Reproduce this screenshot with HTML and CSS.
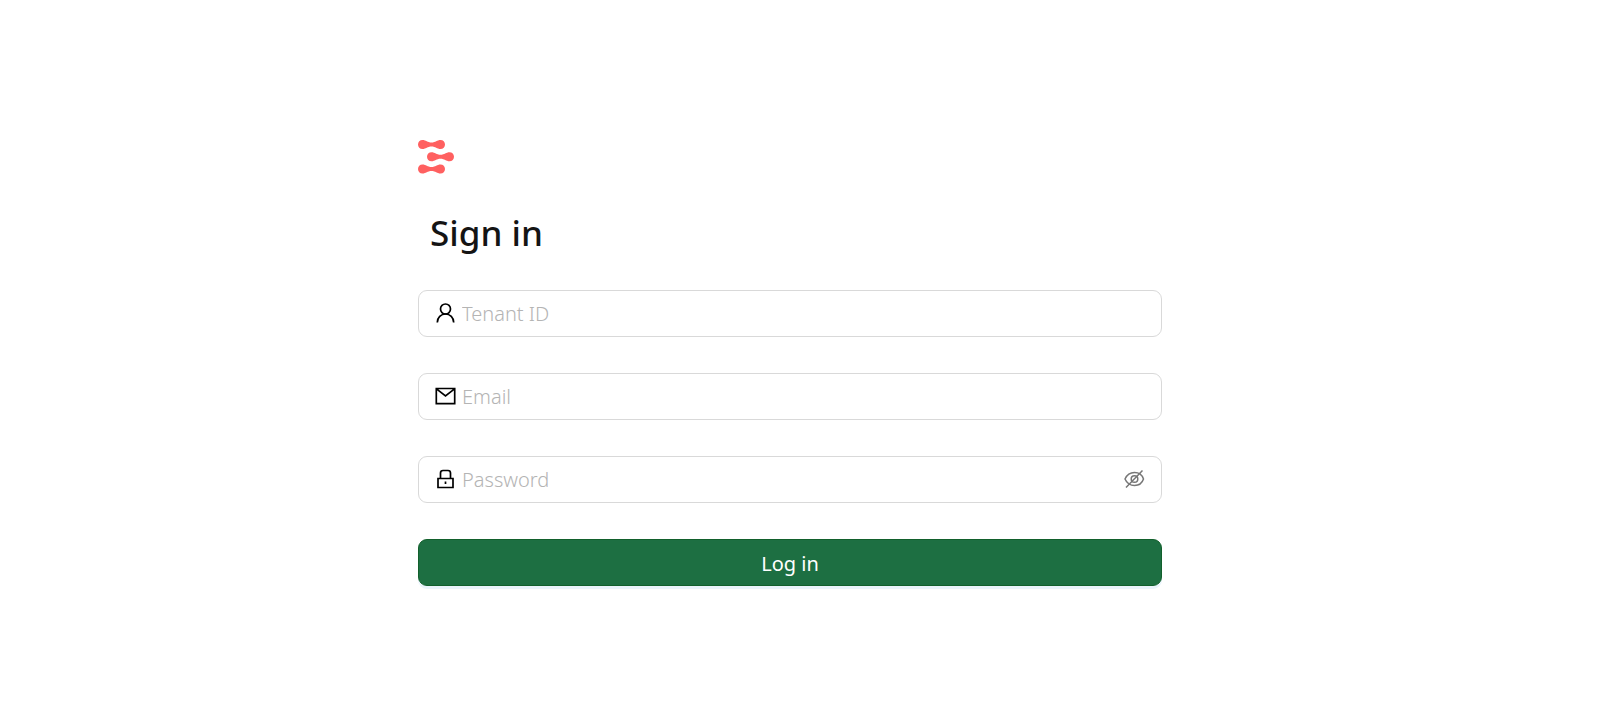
FILE: index.html
```html
<!DOCTYPE html>
<html lang="en">
<head>
    <meta charset="utf-8">
    <title>Sign in</title>
    <link rel="stylesheet" href="styles.css">
</head>
<body>
    <main class="login">
        <svg class="logo" viewBox="0 0 36 34" aria-hidden="true">
            <defs>
                <path id="bar" d="M4.500 0C8 0 9.500 2.500 13.500 2.500S19 0 22.500 0C25.200 0 27 2 27 4.500S25.200 9 22.500 9C19 9 17.500 6.500 13.500 6.500S8 9 4.500 9C1.800 9 0 7 0 4.500S1.800 0 4.500 0Z"/>
            </defs>
            <use href="#bar"/>
            <use href="#bar" x="9" y="12.300"/>
            <use href="#bar" y="24.600"/>
        </svg>

        <h1>Sign in</h1>

        <form class="login-form">
            <div class="field">
                <label for="tenant" aria-label="Tenant ID">
                    <svg class="icon" viewBox="0 0 21 21">
                        <circle cx="10.500" cy="6" r="5"/>
                        <path d="M2.300 19.500C2.300 14.500 6 11 10.500 11S18.700 14.500 18.700 19.500"/>
                    </svg>
                </label>
                <input type="text" id="tenant" placeholder="Tenant ID">
            </div>
            <div class="field">
                <label for="email" aria-label="Email">
                    <svg class="icon" viewBox="0 0 21 21">
                        <path d="M1.300 2.500H19.700V17.700H1.300ZM1.800 3.200L10.500 10L19.200 3.200"/>
                    </svg>
                </label>
                <input type="email" id="email" placeholder="Email">
            </div>
            <div class="field">
                <label for="password" aria-label="Password">
                    <svg class="icon" viewBox="0 0 21 21">
                        <path d="M3 9.500H18V18.500H3ZM5.500 9.500V4Q5.500 1.500 8 1.500H13Q15.500 1.500 15.500 4V9.500M10.500 12.500V15"/>
                    </svg>
                </label>
                <input type="password" id="password" placeholder="Password">
                <button type="button" class="toggle" aria-label="Show password">
                    <svg class="icon" viewBox="0 0 21 21">
                        <path d="M1 10C3 5.500 6 3.500 10.500 3.500S18 5.500 19.500 10C18 14.500 15 16.500 10.500 16.500S3 14.500 1 10ZM18.500 1.500L2 18.500"/>
                        <circle cx="10.500" cy="10" r="3.300"/>
                    </svg>
                </button>
            </div>
            <button type="submit" class="submit">Log in</button>
        </form>
    </main>
</body>
</html>
```

FILE: styles.css
```css
* {
    box-sizing: border-box;
}

body {
    margin: 0;
    padding: 140px 20px 20px 0;
    background-color: #fff;
    color: #141414;
    font-family: "Segoe UI", "Noto Sans", "Open Sans", sans-serif;
    font-size: 20px;
}

.login {
    max-width: 744px;
    margin: 0 auto;
}

.logo {
    display: block;
    width: 36px;
    height: 34px;
    fill: #ff6060;
}

h1 {
    margin: 35px 12px 33px;
    font-size: 35px;
    font-weight: 500;
    line-height: 48px;
}

.login-form {
    display: flex;
    flex-direction: column;
    gap: 36px;
}

.field {
    display: flex;
    align-items: center;
    gap: 6px;
    height: 47px;
    padding: 0 16px;
    border: 1px solid #d9d9d9;
    border-radius: 9px;
}

.field label {
    display: flex;
}

.field input {
    flex: 1;
    min-width: 0;
    padding: 0;
    border: none;
    outline: none;
    background: none;
    color: inherit;
    font: inherit;
}

.field input::placeholder {
    color: #b4b4b4;
    font-weight: 300;
}

.field:focus-within {
    border-color: #1d6f42;
}

.icon {
    display: block;
    width: 21px;
    height: 21px;
    fill: none;
    stroke: #000;
    stroke-width: 1.7;
}

.toggle {
    padding: 0;
    border: none;
    background: none;
    cursor: pointer;
}

.toggle .icon {
    stroke: #777;
    stroke-width: 1.5;
}

.submit {
    height: 47px;
    padding: 2px 16px 0;
    border: 1px solid #12602c;
    border-radius: 9px;
    background-color: #1d6f42;
    box-shadow: 0 3px 0 #eaf4fc;
    color: #fff;
    font: inherit;
    cursor: pointer;
}
```
